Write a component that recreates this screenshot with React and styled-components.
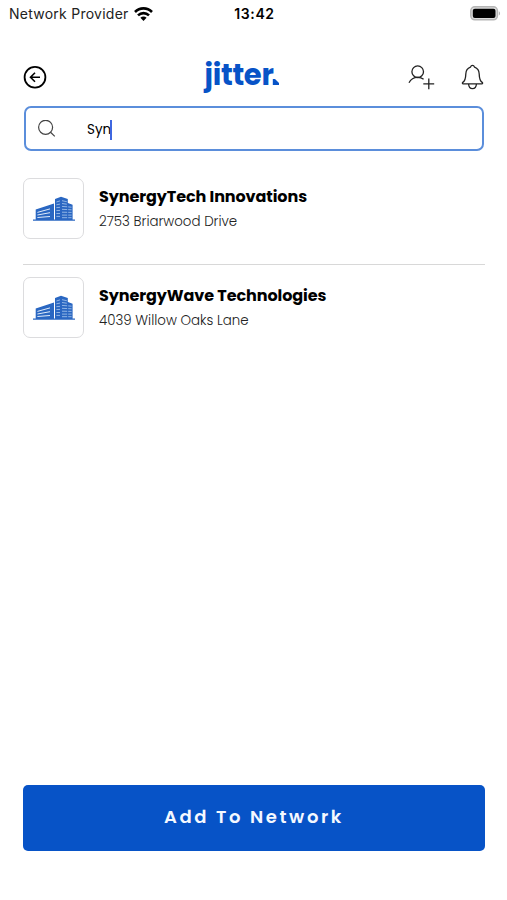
import React, { useState } from 'react';
import styled, { createGlobalStyle } from 'styled-components';

const GlobalStyle = createGlobalStyle`
  * {
    box-sizing: border-box;
  }

  body {
    margin: 0;
    background-color: #fff;
    font-family: Poppins, Inter, 'Open Sans', sans-serif;
    color: #000;
  }
`;

const Screen = styled.div`
  display: flex;
  flex-direction: column;
  width: 507px;
  height: 900px;
  overflow: hidden;
  background-color: #fff;
`;

const StatusBar = styled.div`
  display: grid;
  grid-template-columns: 1fr auto 1fr;
  align-items: center;
  height: 28px;
  padding: 0 6px 0 9px;
  font-family: Inter, sans-serif;
  font-size: 14px;
  line-height: 18px;
`;

const Carrier = styled.div`
  display: flex;
  align-items: center;
  gap: 5px;
  color: #222;
  white-space: nowrap;
`;

const CarrierName = styled.span`
  letter-spacing: 0.25px;
`;

const Clock = styled.div`
  margin-right: 1px;
  font-weight: 600;
  letter-spacing: 0.6px;
`;

const Battery = styled.div`
  display: flex;
  justify-content: flex-end;
  margin-top: -2px;
`;

const Header = styled.header`
  display: grid;
  grid-template-columns: 1fr auto 1fr;
  align-items: center;
  height: 58px;
  margin-top: 20px;
  padding: 0 23px;
`;

const IconButton = styled.button`
  display: flex;
  padding: 0;
  border: none;
  background: none;
  cursor: pointer;
`;

const Logo = styled.div`
  display: flex;
  align-items: baseline;
  margin: -5px 24px 0 0;
  color: #0753c7;
  font-size: 29px;
  font-weight: 700;
  line-height: 40px;
`;

const LogoText = styled.span`
  letter-spacing: -0.3px;
`;

const LogoMark = styled.svg`
  margin-left: -2px;
`;

const Actions = styled.div`
  display: flex;
  justify-content: flex-end;
  gap: 26px;
`;

const SearchBox = styled.label`
  display: flex;
  align-items: center;
  height: 45px;
  margin: 0 23px 0 24px;
  padding-left: 12px;
  border: 2px solid #5b8edb;
  border-radius: 7px;
`;

const Query = styled.div`
  display: flex;
  align-items: center;
  margin: 2px 0 0 31px;
  font-size: 13.5px;
  line-height: 20px;
`;

const Caret = styled.span`
  width: 2px;
  height: 20px;
  margin-left: -1px;
  background-color: #3f67e0;
`;

const Results = styled.ul`
  flex: 1;
  margin: 27px 22px 0 23px;
  padding: 0;
  list-style: none;
`;

const Company = styled.li`
  display: flex;
  height: 99px;

  & + & {
    margin-top: -13px;
    padding-top: 12px;
    border-top: 1.5px solid #d8d8d8;
  }
`;

const Thumb = styled.div`
  display: flex;
  align-items: center;
  justify-content: center;
  width: 61px;
  height: 61px;
  border: 1.5px solid #dcdcde;
  border-radius: 7px;
`;

const Details = styled.div`
  margin-left: 15px;
  padding-top: 7px;
  white-space: nowrap;
`;

const Name = styled.div`
  font-size: 16px;
  font-weight: 700;
  line-height: 24px;
  letter-spacing: -0.09px;
`;

const Address = styled.div`
  margin-top: 2px;
  color: #222;
  font-size: 13.4px;
  font-weight: 300;
  line-height: 21px;
`;

const AddButton = styled.button`
  height: 66px;
  margin: 0 22px 49px 23px;
  padding: 0 0 3px;
  border: none;
  border-radius: 5px;
  background-color: #0753c7;
  color: #f4f8ff;
  font-family: inherit;
  font-size: 18px;
  font-weight: 600;
  letter-spacing: 2.6px;
  cursor: pointer;
`;

const companies = [
  { name: 'SynergyTech Innovations', address: '2753 Briarwood Drive' },
  { name: 'SynergyWave Technologies', address: '4039 Willow Oaks Lane' },
];

const WifiIcon = () => (
  <svg width="19" height="14" viewBox="0 0 19 14" fill="none" stroke="#000" strokeWidth="2.6">
    <path d="M1 5C5.8 .2 13.2 .2 18 5" />
    <path d="M4 8.4c3.1-3 7.9-3 11 0" />
    <path d="M6.4 10.8c1.7-1.7 4.5-1.7 6.2 0L9.5 13.9z" fill="#000" stroke="none" />
  </svg>
);

const BatteryIcon = () => (
  <svg width="31" height="15" viewBox="0 0 31 15">
    <rect x=".8" y=".8" width="26.6" height="13" rx="4" fill="#ddd" stroke="#b5b5b5" strokeWidth="1.5" />
    <rect x="2.8" y="2.7" width="22.7" height="9.3" rx="2" fill="#000" />
    <path d="M28.8 5.2c1.7.7 1.7 3.6 0 4.3z" fill="#b5b5b5" />
  </svg>
);

const BackIcon = () => (
  <svg width="24" height="24" viewBox="0 0 24 24" fill="none" stroke="#000" strokeWidth="1.8">
    <circle cx="12" cy="12.3" r="10.4" />
    <path d="M17 12.3H7.7M12 7.8l-4.5 4.5 4.5 4.5" strokeWidth="1.6" />
  </svg>
);

const AddUserIcon = () => (
  <svg width="27" height="26" viewBox="0 0 27 26" fill="none" stroke="#222" strokeWidth="1.3">
    <circle cx="9.7" cy="7.7" r="5.8" />
    <path d="M1 18.7c1.8-3.5 4.7-5.3 8.7-5.3 2.4 0 4.4.6 5.9 1.8" />
    <path d="M20.8 14.4v10.8M15.3 19.8h10.9" />
  </svg>
);

const BellIcon = () => (
  <svg width="23" height="26" viewBox="0 0 23 26" fill="none" stroke="#222" strokeWidth="1.3" strokeLinejoin="round">
    <path d="M9.4 3.2c1-2.4 3.2-2.4 4.2 0 3.2 1.2 4.5 3.6 4.6 6.7.1 4.6 1 7.1 3 8.5.7.5.5 1.5-.4 1.5H2.2c-.9 0-1.1-1-.4-1.5 2-1.4 2.9-3.9 3-8.5.1-3.1 1.4-5.5 4.6-6.7z" />
    <path d="M7.6 20c.3 6.2 7.5 6.2 7.8 0" />
  </svg>
);

const SearchIcon = () => (
  <svg width="18" height="18" viewBox="0 0 18 18" fill="none" stroke="#444" strokeWidth="1.2">
    <circle cx="7.6" cy="7.3" r="7" />
    <path d="m12.5 12.3 4.3 4.1" />
  </svg>
);

const BuildingIcon = () => (
  <svg width="42" height="26" viewBox="0 0 42 26">
    <path d="M2.7 24V13.6L21 7.6V24zM22 24V3L28 .8l6.8 2.2v4l4.8 1.7V24z" fill="#2a67c2" />
    <path d="M0 23.4h42v1.4H0z" fill="#2a67c2" />
    <path
      d="M4.4 16.4 17 12.9M4.4 19 17 16.7M4.4 21.5l12.6-1"
      stroke="#e0ebfa"
      strokeWidth="1"
    />
    <path
      d="m23.4 6 3.6-1.1M23.4 8.8l3.6-.7M23.4 11.7l3.6-.4M23.4 14.6l3.6-.2M23.4 17.5H27M23.4 20.4H27M29 4.7l4.8 1M29 7.5l4.8.7M29 10.4l9.6.8M29 13.3l9.6.5M29 16.2l9.6.2M29 19.1h9.6M29 21.7h9.6"
      stroke="#9dbde9"
      strokeWidth=".9"
    />
    <path d="M28 1.5V24M34.7 7v17" stroke="#2a67c2" strokeWidth="1" />
  </svg>
);

const App = () => {
  const [query] = useState('Syn');
  const results = companies.filter((company) => company.name.startsWith(query));

  return (
    <>
      <GlobalStyle />
      <Screen>
        <StatusBar>
          <Carrier>
            <CarrierName>Network Provider</CarrierName>
            <WifiIcon />
          </Carrier>
          <Clock>13:42</Clock>
          <Battery>
            <BatteryIcon />
          </Battery>
        </StatusBar>
        <Header>
          <IconButton aria-label="Back">
            <BackIcon />
          </IconButton>
          <Logo>
            <LogoText>jitter</LogoText>
            <LogoMark width="7" height="6" viewBox="0 0 7 6">
              <path d="M.8 0H3l4 4v2H.8z" fill="#0753c7" />
            </LogoMark>
          </Logo>
          <Actions>
            <IconButton aria-label="Add contact">
              <AddUserIcon />
            </IconButton>
            <IconButton aria-label="Notifications">
              <BellIcon />
            </IconButton>
          </Actions>
        </Header>
        <SearchBox>
          <SearchIcon />
          <Query>
            {query}
            <Caret />
          </Query>
        </SearchBox>
        <Results>
          {results.map((company) => (
            <Company key={company.name}>
              <Thumb>
                <BuildingIcon />
              </Thumb>
              <Details>
                <Name>{company.name}</Name>
                <Address>{company.address}</Address>
              </Details>
            </Company>
          ))}
        </Results>
        <AddButton>Add To Network</AddButton>
      </Screen>
    </>
  );
};

export default App;
